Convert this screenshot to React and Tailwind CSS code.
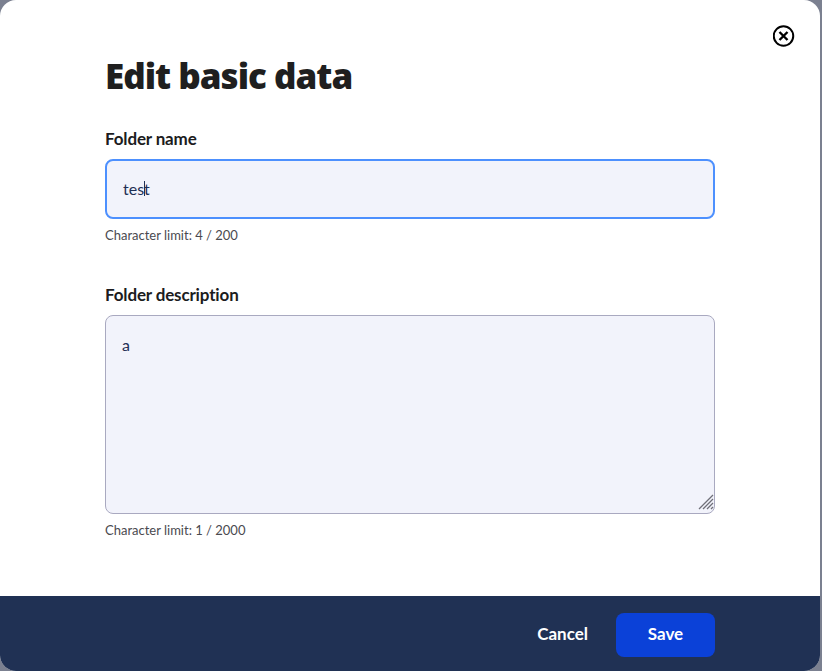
import { useEffect, useRef } from 'react';

const Field = ({ label, hint, children }) => (
  <div>
    <label className="block text-[17px] leading-[20px] font-bold tracking-[-0.15px] text-[#1c1c1e]">{label}</label>
    {children}
    <p className="mt-[7px] text-[13px] leading-[18px] text-[#4a4a4f]">{hint}</p>
  </div>
);

const App = () => {
  const nameRef = useRef(null);

  useEffect(() => {
    nameRef.current.setSelectionRange(3, 3);
  }, []);

  return (
    <div className="h-[671px] w-[822px] bg-[#7b8090] font-['Lato',sans-serif]">
      <div className="relative flex h-full w-[820px] flex-col overflow-hidden rounded-[16px] bg-white">
        <button className="absolute top-[25px] right-[25px] text-black">
          <svg width="22" height="22" viewBox="0 0 22 22" fill="none" stroke="currentColor">
            <circle cx="10.5" cy="11" r="9.75" strokeWidth="2" />
            <path d="M6.5 7l8 8M14.5 7l-8 8" strokeWidth="2.4" />
          </svg>
        </button>

        <div className="flex-1 pt-[53px] pl-[105px] pr-[105px]">
          <h1 className="text-[35px] leading-[45px] font-black text-[#1f1f1f] font-['Open_Sans',sans-serif] tracking-[-1px]">
            Edit basic data
          </h1>

          <div className="mt-[31px]">
            <Field label="Folder name" hint="Character limit: 4 / 200">
              <div className="relative mt-[10px]">
                <input
                  ref={nameRef}
                  defaultValue="test"
                  className="block h-[60px] w-full rounded-[8px] border-2 border-[#4d90fe] bg-[#f2f3fb] px-[16px] pb-[2px] text-[16px] text-[#1f2f55] outline-none"
                />
                <span className="absolute top-[22px] left-[39px] h-[15px] w-px bg-[#1f2f55]" />
              </div>
            </Field>
          </div>

          <div className="mt-[41px]">
            <Field label="Folder description" hint="Character limit: 1 / 2000">
              <div className="relative mt-[10px]">
                <textarea
                  defaultValue="a"
                  className="block h-[199px] w-full resize-none rounded-[8px] border border-[#a9a9c0] bg-[#f2f3fb] px-[16px] py-[19px] text-[16px] leading-[20px] text-[#1f2f55] outline-none"
                />
                <svg
                  className="absolute right-[1px] bottom-[4px]"
                  width="16"
                  height="16"
                  viewBox="0 0 16 16"
                  stroke="#6f6f78"
                  strokeWidth="1.3"
                >
                  <path d="M1 15L15 1M5 15L15 5M9 15l6-6M13 15l2-2" />
                </svg>
              </div>
            </Field>
          </div>
        </div>

        <div className="flex h-[75px] items-center justify-end gap-[28px] bg-[#203154] pr-[105px]">
          <button className="text-[17px] font-bold text-white">Cancel</button>
          <button className="mt-[2px] h-[44px] w-[99px] rounded-[8px] bg-[#0b41d8] pb-[2px] text-[17px] font-bold text-white">Save</button>
        </div>
      </div>
    </div>
  );
};

export default App;
